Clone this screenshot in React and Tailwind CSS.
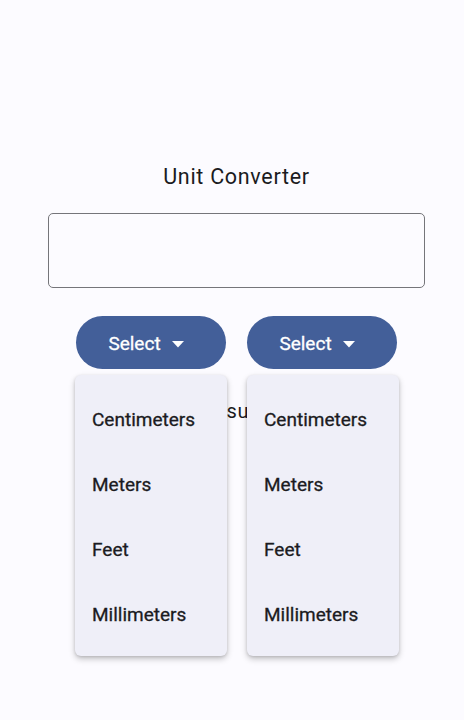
import React from 'react';

const units = ['Centimeters', 'Meters', 'Feet', 'Millimeters'];

const Caret = () => (
  <svg width="12" height="7" viewBox="0 0 12 7" className="ml-[11px]">
    <path d="M0 0 L12 0 L6 6.5 Z" fill="#ffffff" />
  </svg>
);

const SelectMenu = ({ offset }) => (
  <div className="relative">
    <button className="flex items-center justify-center w-[150px] h-[53px] rounded-full bg-[#435f99] text-white text-[19px] pr-[10px] pt-[3px]">
      <span className="[-webkit-text-stroke:0.3px_white]">Select</span>
      <Caret />
    </button>
    <div
      className={`absolute top-[59px] w-[152px] h-[281px] rounded-[6px] bg-[#efeff8] shadow-[0_3px_6px_rgba(0,0,0,0.22),0_1px_3px_rgba(0,0,0,0.12)] pt-[13px] z-10 ${offset ? 'left-[-1px]' : 'left-0'}`}
    >
      {units.map((u) => (
        <div key={u} className="h-[65px] flex items-center pl-[17px] text-[19px] text-[#1b1b21] [-webkit-text-stroke:0.3px_#1b1b21]">
          {u}
        </div>
      ))}
    </div>
  </div>
);

export default function App() {
  return (
    <div
      className="min-h-[720px] w-[464px] bg-[#fcfbff] pl-[9px] flex flex-col items-center pt-[164px]"
      style={{ fontFamily: 'Roboto, "Noto Sans", sans-serif' }}
    >
      <h1 className="text-[21.5px] leading-[26px] tracking-[0.7px] text-[#1b1b21]">Unit Converter</h1>
      <div className="mt-[23px] w-[377px] h-[75px] rounded-[5px] border border-[#75757a]" />
      <div className="mt-[28px] flex gap-[21px]">
        <SelectMenu offset />
        <SelectMenu />
      </div>
      <p className="mt-[28px] pr-[9px] text-[20px] leading-[28px] tracking-[0.5px] text-[#1b1b21]">Result</p>
    </div>
  );
}
